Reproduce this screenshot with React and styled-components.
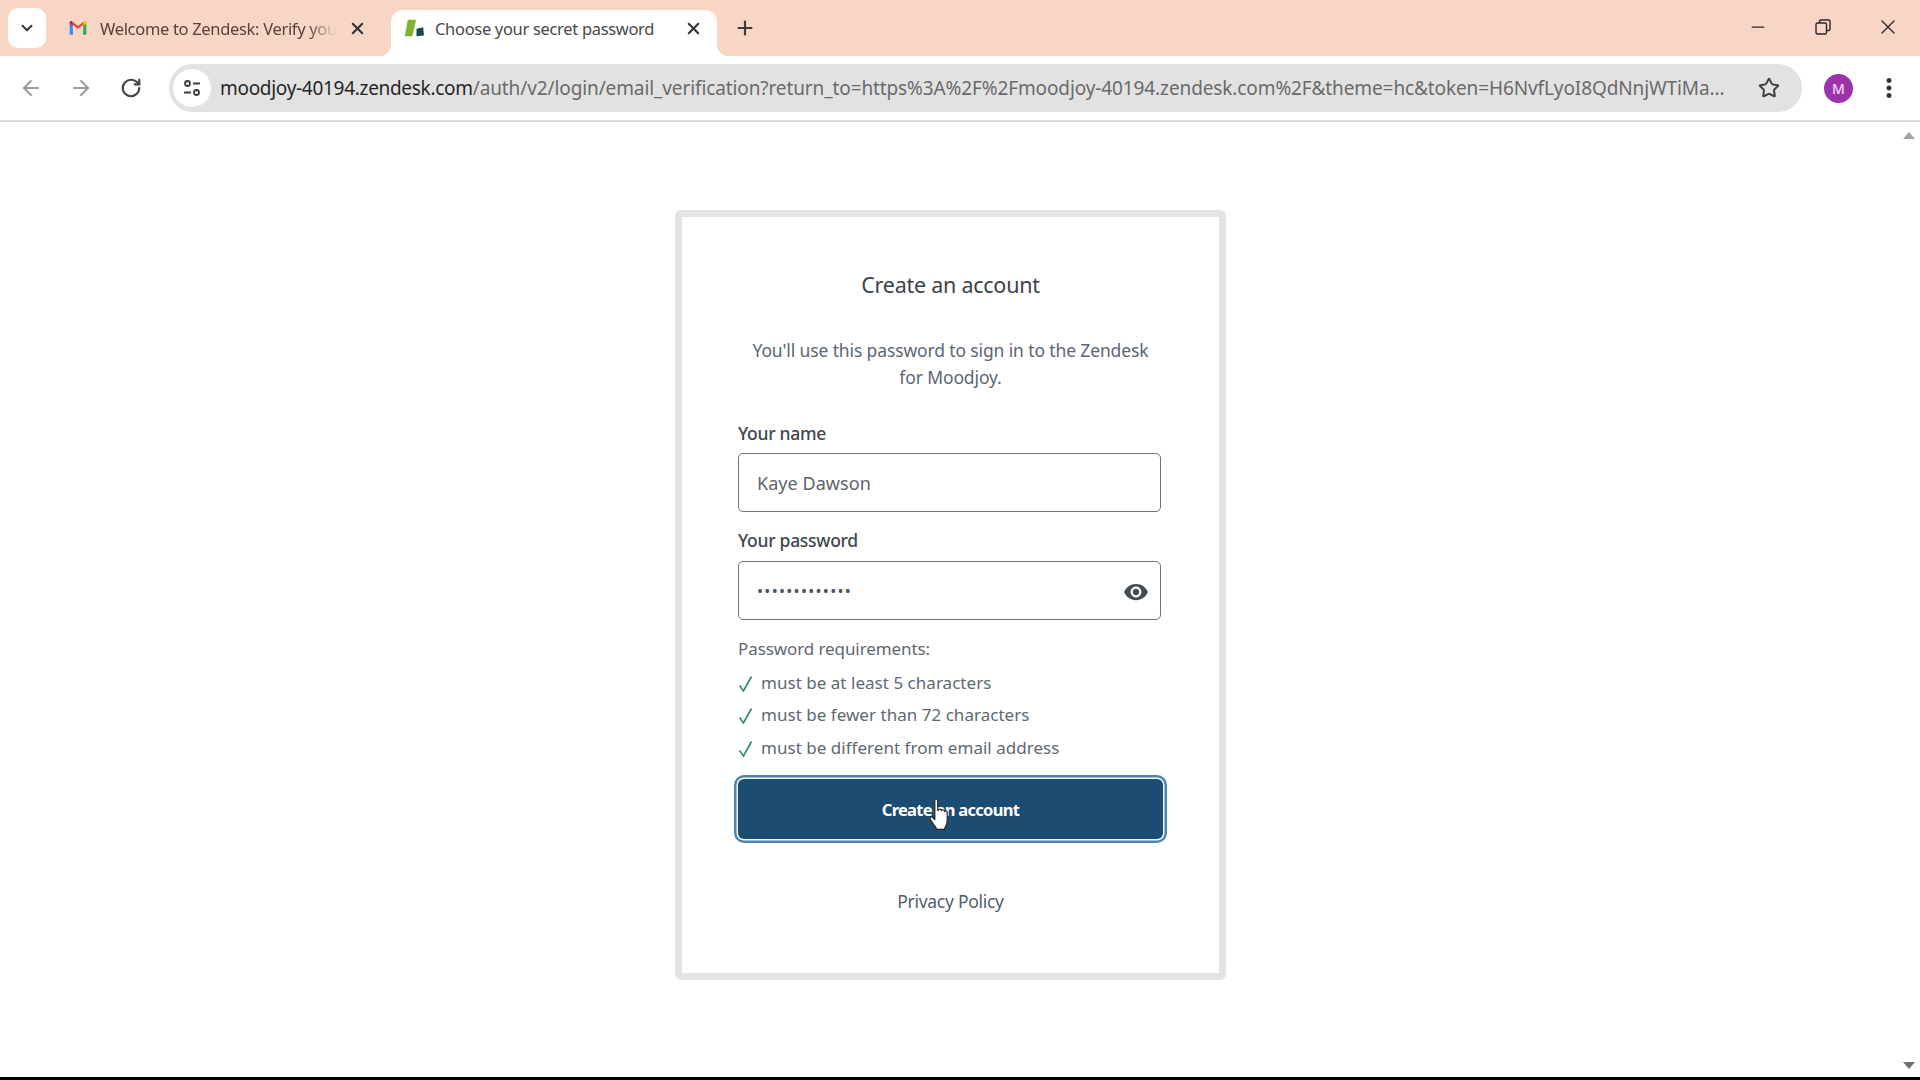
import React from "react";
import styled, { createGlobalStyle } from "styled-components";
import { ChevronDown, ArrowLeft, ArrowRight, RotateCw, Star, X, Plus, Minus } from "lucide-react";
import { MdVisibility, MdMoreVert } from "react-icons/md";

const Global = createGlobalStyle`
  html, body { margin: 0; padding: 0; background: #fff; }
  * { box-sizing: border-box; }
  body { font-family: "Noto Sans", "Open Sans", sans-serif; }
`;

const Page = styled.div`
  width: 1920px;
  height: 1080px;
  display: flex;
  flex-direction: column;
  overflow: hidden;
  background: #fff;
`;

const TabStrip = styled.div`
  height: 56px;
  flex: none;
  background: #f8d6c6;
  display: flex;
  align-items: flex-end;
  padding-left: 8px;
`;

const TabSearch = styled.div`
  width: 38px;
  height: 40px;
  margin-bottom: 8px;
  background: #fff;
  border-radius: 10px;
  display: flex;
  align-items: center;
  justify-content: center;
  color: #333;
`;

const Tab = styled.div`
  position: relative;
  height: 46px;
  width: ${(p) => p.$width}px;
  margin-left: ${(p) => p.$offset}px;
  display: flex;
  align-items: center;
  padding: 0 14px 10px 13px;
  background: ${(p) => (p.$active ? "#fff" : "transparent")};
  border-radius: 12px 12px 0 0;
  ${(p) =>
    p.$active &&
    `
    &::before, &::after {
      content: "";
      position: absolute;
      bottom: 0;
      width: 12px;
      height: 12px;
    }
    &::before { left: -12px; background: radial-gradient(circle at 0 0, transparent 12px, #fff 12.5px); }
    &::after { right: -12px; background: radial-gradient(circle at 100% 0, transparent 12px, #fff 12.5px); }
  `}
`;

const Favicon = styled.svg`
  width: 20px;
  height: 20px;
  flex: none;
`;

const TabTitle = styled.span`
  flex: 1;
  min-width: 0;
  margin-left: ${(p) => p.$gap}px;
  font-size: 16.5px;
  letter-spacing: -0.32px;
  color: ${(p) => (p.$active ? "#48494b" : "#57433c")};
  white-space: nowrap;
  overflow: hidden;
  ${(p) =>
    !p.$active &&
    `-webkit-mask-image: linear-gradient(to right, #000 88%, transparent 100%);
     mask-image: linear-gradient(to right, #000 88%, transparent 100%);`}
`;

const TabClose = styled(X)`
  flex: none;
  margin-left: 12px;
  color: #333;
`;

const NewTab = styled.div`
  width: 24px;
  height: 24px;
  margin: 0 0 16px 16px;
  color: #3f3a38;
  display: flex;
  align-items: center;
  justify-content: center;
`;

const WindowControls = styled.div`
  margin-left: auto;
  height: 56px;
  display: flex;
  align-items: center;
  padding-bottom: 2px;
`;

const WindowButton = styled.div`
  width: 65px;
  display: flex;
  justify-content: center;
  color: #2c2623;
`;

const Toolbar = styled.div`
  height: 66px;
  flex: none;
  display: flex;
  align-items: center;
  background: #fff;
  border-bottom: 2px solid #d9d9d9;
  padding-left: 11px;
`;

const NavButton = styled.div`
  width: 40px;
  height: 40px;
  margin-right: ${(p) => p.$gap || 0}px;
  display: flex;
  align-items: center;
  justify-content: center;
  color: ${(p) => (p.$dim ? "#9a9a9a" : "#444")};
`;

const Omnibox = styled.div`
  width: 1633px;
  height: 48px;
  margin-left: 18px;
  border-radius: 24px;
  background: #e2e2e2;
  display: flex;
  align-items: center;
  padding: 0 22px 0 4px;
`;

const SiteInfo = styled.div`
  width: 38px;
  height: 38px;
  flex: none;
  background: #fff;
  border-radius: 50%;
  display: flex;
  align-items: center;
  justify-content: center;
`;

const Url = styled.div`
  flex: 1;
  min-width: 0;
  margin-left: 9px;
  font-size: 19px;
  letter-spacing: -0.11px;
  white-space: nowrap;
  overflow: hidden;
  color: #6a6a6a;
`;

const Host = styled.span`
  color: #262626;
  letter-spacing: -0.3px;
`;

const Avatar = styled.div`
  width: 29px;
  height: 29px;
  margin-left: 22px;
  border-radius: 50%;
  background: #9c33ad;
  color: #f3d9f5;
  font-size: 14px;
  font-weight: 500;
  display: flex;
  align-items: center;
  justify-content: center;
  flex: none;
`;

const Kebab = styled.div`
  margin-left: 21px;
  display: flex;
  color: #333;
`;

const Viewport = styled.div`
  position: relative;
  flex: 1;
  min-height: 0;
  padding: 88px 19px 0 0;
  display: flex;
  justify-content: center;
  align-items: flex-start;
`;

const ScrollArrow = styled.div`
  position: absolute;
  right: 5px;
  ${(p) => (p.$down ? "bottom: 8px;" : "top: 10px;")}
  width: 0;
  height: 0;
  border-left: 6px solid transparent;
  border-right: 6px solid transparent;
  ${(p) => (p.$down ? "border-top: 7px solid #6f6f6f;" : "border-bottom: 7px solid #a3a3a3;")}
`;

const BottomEdge = styled.div`
  height: 3px;
  flex: none;
  background: #000;
`;

const Card = styled.div`
  width: 551px;
  border: 7px solid #e4e4e4;
  border-radius: 6px;
  background: #fff;
  padding: 53px 56px 60px;
  display: flex;
  flex-direction: column;
`;

const Title = styled.h1`
  margin: 0;
  font-size: 21.5px;
  line-height: 30px;
  font-weight: 400;
  letter-spacing: -0.25px;
  text-align: center;
  color: #3c4247;
`;

const Intro = styled.p`
  margin: 37px 0 0;
  font-size: 17.5px;
  line-height: 27px;
  letter-spacing: -0.13px;
  text-align: center;
  color: #5c6670;
`;

const Label = styled.label`
  display: block;
  margin-top: ${(p) => p.$top}px;
  font-size: 17.5px;
  line-height: 24px;
  font-weight: 500;
  letter-spacing: -0.28px;
  color: #3f464d;
`;

const Field = styled.div`
  height: 59px;
  margin-top: ${(p) => p.$top}px;
  margin-right: 2px;
  border: 1.5px solid #6b747c;
  border-radius: 5px;
  display: flex;
  align-items: center;
  justify-content: space-between;
  padding: 0 11px 0 18px;
  font-size: 18px;
  letter-spacing: 0.05px;
  color: #5c646b;
`;

const Dots = styled.span`
  font-size: 16px;
  letter-spacing: 1.3px;
  color: #4d555c;
`;

const EyeIcon = styled(MdVisibility)`
  color: #434a50;
  margin-top: 2px;
`;

const RequirementsHead = styled.div`
  margin-top: 17px;
  font-size: 17px;
  line-height: 24px;
  letter-spacing: -0.09px;
  color: #5f6870;
`;

const Requirements = styled.ul`
  list-style: none;
  margin: 5px 0 0;
  padding: 0;
`;

const Requirement = styled.li`
  height: 32.5px;
  display: flex;
  align-items: center;
  font-size: 17px;
  letter-spacing: 0.03px;
  color: #5f6870;
`;

const Check = styled.svg`
  width: 16px;
  height: 18px;
  flex: none;
  margin-right: 7px;
  margin-top: 3px;
`;

const SubmitWrap = styled.div`
  position: relative;
  margin-top: 15px;
`;

const Submit = styled.button`
  display: block;
  width: 100%;
  height: 60px;
  border: 0;
  border-radius: 6px;
  background: #1d4c72;
  box-shadow: 0 0 0 1.5px #f2f7fb, 0 0 0 4px #4f84ad;
  color: #fff;
  font-family: inherit;
  font-size: 16.5px;
  font-weight: 700;
  letter-spacing: -0.7px;
  padding: 2px 0 0;
`;

const Pointer = styled.svg`
  position: absolute;
  left: 189px;
  top: 19px;
  width: 27px;
  height: 33px;
  pointer-events: none;
`;

const Privacy = styled.a`
  margin-top: 50px;
  font-size: 17.5px;
  line-height: 24px;
  letter-spacing: -0.28px;
  text-align: center;
  color: #4f5f6e;
`;

const GmailIcon = () => (
  <Favicon viewBox="0 0 24 24">
    <path d="M2 20V6.500L5.500 5l.5 15H3.500A1.500 1.500 0 0 1 2 20z" fill="#4285f4" />
    <path d="M22 20V6.500L18.500 5 18 20h2.500A1.500 1.500 0 0 0 22 20z" fill="#34a853" />
    <path d="M5.500 8 12 13l6.500-5V4.500L12 9.500 5.500 4.500z" fill="#ea4335" />
    <path d="M2 6.500 5.500 9V4.500L4.500 3.800C3.300 3 2 3.800 2 5.300z" fill="#c5221f" />
    <path d="M22 6.500 18.500 9V4.500l1-.7C20.700 3 22 3.800 22 5.300z" fill="#fbbc04" />
  </Favicon>
);

const ZendeskIcon = () => (
  <Favicon viewBox="0 0 24 24">
    <path d="M4.500 2h10L10 22H1z" fill="#7fb52d" />
    <path d="M15 13l8-2 1 10-9 1z" fill="#17494d" />
  </Favicon>
);

const RestoreIcon = () => (
  <svg width="16" height="16" viewBox="0 0 16 16" fill="none" stroke="currentColor" strokeWidth="1.400">
    <rect x="1" y="4" width="10.500" height="11" rx="1.500" />
    <path d="M4.500 4V2.500A1.500 1.500 0 0 1 6 1h7.500A1.500 1.500 0 0 1 15 2.500V10a1.500 1.500 0 0 1-1.500 1.500h-2" />
  </svg>
);

const SiteInfoIcon = () => (
  <svg width="20" height="20" viewBox="0 0 20 20" fill="none" stroke="#3c3c3c" strokeWidth="1.800">
    <circle cx="5.500" cy="5.500" r="2.500" />
    <path d="M11 5.500h7M2 14.500h7" />
    <circle cx="14.500" cy="14.500" r="2.500" />
  </svg>
);

const CheckMark = () => (
  <Check viewBox="0 0 16 18" fill="none" stroke="#2f8f6f" strokeWidth="1.700">
    <path d="M1.500 10.500 5.500 16 13.500 1.500" />
  </Check>
);

const HandCursor = () => (
  <Pointer viewBox="0 0 24 32">
    <path
      d="M6.500 2.200c0-1.600 2.800-1.600 2.800 0V12l.6-.2c.2-1.500 2.500-1.500 2.700 0l.3.500c.3-1.300 2.500-1.300 2.700.2l.3.600c.5-1 2.500-.8 2.600.8v8.500c0 3-2 6-3 8H8.500c-1-2-5-7-6.500-10-.8-1.600 1-3 2.500-1.500l2 2z"
      fill="#fff"
      stroke="#222"
      strokeWidth="1.100"
      strokeLinejoin="round"
    />
  </Pointer>
);

export default function App() {
  return (
    <Page>
      <Global />
      <TabStrip>
        <TabSearch>
          <ChevronDown size={18} strokeWidth={2.600} />
        </TabSearch>
        <Tab $width={326} $offset={9}>
          <GmailIcon />
          <TabTitle $gap={12}>Welcome to Zendesk: Verify your email</TabTitle>
          <TabClose size={19} strokeWidth={2.600} />
        </Tab>
        <Tab $active $width={326} $offset={10}>
          <ZendeskIcon />
          <TabTitle $active $gap={11}>Choose your secret password</TabTitle>
          <TabClose size={19} strokeWidth={2.600} />
        </Tab>
        <NewTab>
          <Plus size={22} strokeWidth={2.400} />
        </NewTab>
        <WindowControls>
          <WindowButton><Minus size={20} strokeWidth={1.500} /></WindowButton>
          <WindowButton><RestoreIcon /></WindowButton>
          <WindowButton><X size={24} strokeWidth={1.400} /></WindowButton>
        </WindowControls>
      </TabStrip>
      <Toolbar>
        <NavButton $dim $gap={10}><ArrowLeft size={24} strokeWidth={2} /></NavButton>
        <NavButton $dim $gap={10}><ArrowRight size={24} strokeWidth={2} /></NavButton>
        <NavButton><RotateCw size={22} strokeWidth={2.400} /></NavButton>
        <Omnibox>
          <SiteInfo><SiteInfoIcon /></SiteInfo>
          <Url>
            <Host>moodjoy-40194.zendesk.com</Host>/auth/v2/login/email_verification?return_to=https%3A%2F%2Fmoodjoy-40194.zendesk.com%2F&amp;theme=hc&amp;token=H6NvfLyoI8QdNnjWTiMa...
          </Url>
          <Star size={22} strokeWidth={2.200} color="#444" />
        </Omnibox>
        <Avatar>M</Avatar>
        <Kebab><MdMoreVert size={30} /></Kebab>
      </Toolbar>
      <Viewport>
        <ScrollArrow />
        <Card>
          <Title>Create an account</Title>
          <Intro>You'll use this password to sign in to the Zendesk<br />for Moodjoy.</Intro>
          <Label $top={30}>Your name</Label>
          <Field $top={8}>Kaye Dawson</Field>
          <Label $top={16}>Your password</Label>
          <Field $top={9}>
            <Dots>•••••••••••••</Dots>
            <EyeIcon size={26} />
          </Field>
          <RequirementsHead>Password requirements:</RequirementsHead>
          <Requirements>
            <Requirement><CheckMark />must be at least 5 characters</Requirement>
            <Requirement><CheckMark />must be fewer than 72 characters</Requirement>
            <Requirement><CheckMark />must be different from email address</Requirement>
          </Requirements>
          <SubmitWrap>
            <Submit>Create an account</Submit>
            <HandCursor />
          </SubmitWrap>
          <Privacy>Privacy Policy</Privacy>
        </Card>
        <ScrollArrow $down />
      </Viewport>
      <BottomEdge />
    </Page>
  );
}
